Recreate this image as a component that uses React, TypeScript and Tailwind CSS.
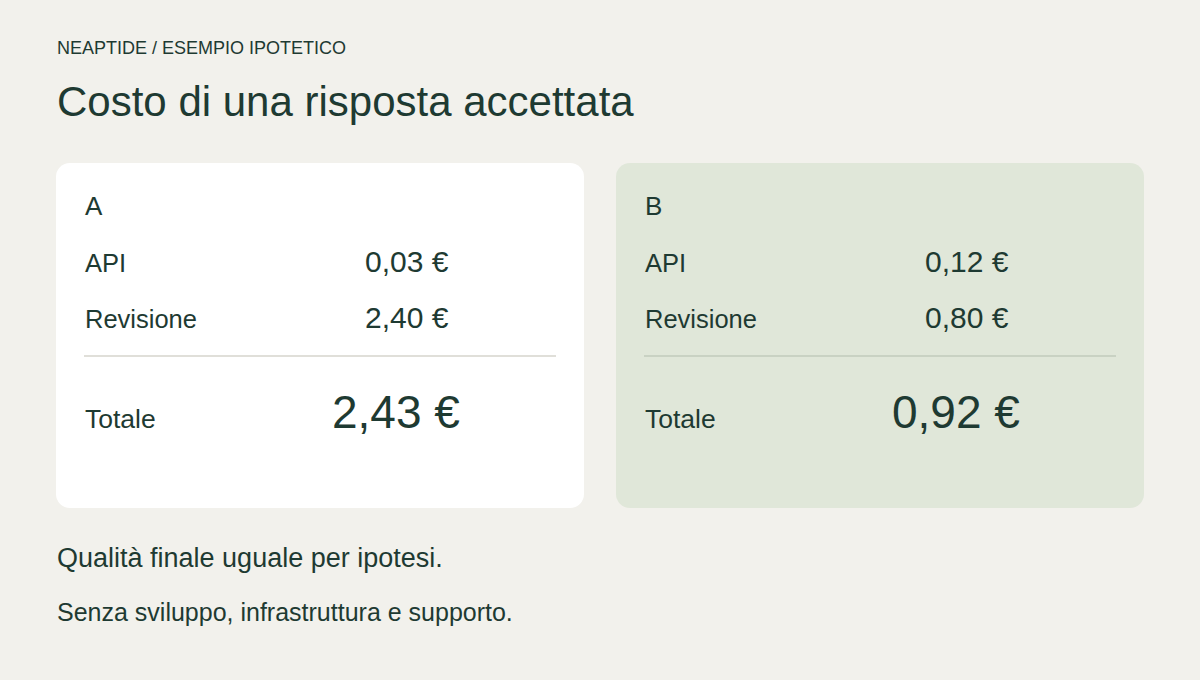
import React from "react";

const font = { fontFamily: '"Liberation Sans", Arial, sans-serif' };

type Card = { name: string; api: string; rev: string; total: string; tone: "white" | "green" };

const cards: Card[] = [
  { name: "A", api: "0,03 €", rev: "2,40 €", total: "2,43 €", tone: "white" },
  { name: "B", api: "0,12 €", rev: "0,80 €", total: "0,92 €", tone: "green" },
];

function CostCard({ c }: { c: Card }) {
  const green = c.tone === "green";
  return (
    <div
      className={
        green
          ? "w-[528px] rounded-[14px] bg-[#e0e7d9] px-7 pt-[30px] pb-[66px]"
          : "w-[528px] rounded-[14px] bg-white px-7 pt-[30px] pb-[66px]"
      }
    >
      <div className="text-[26px] leading-[26px] pl-[1px]">{c.name}</div>
      <div className="mt-[28px] flex items-baseline">
        <div className="w-[281px] text-[25.5px] leading-[30px] pl-[1px]">API</div>
        <div className="text-[30px] leading-[30px]">{c.api}</div>
      </div>
      <div className="mt-[25px] flex items-baseline">
        <div className="w-[281px] text-[25.5px] leading-[30px] pl-[1px]">Revisione</div>
        <div className="text-[30px] leading-[30px]">{c.rev}</div>
      </div>
      <div className={green ? "mt-[21px] h-[2px] bg-[#c9d2c3]" : "mt-[21px] h-[2px] bg-[#e0dfd9]"} />
      <div className="mt-[32px] flex items-baseline">
        <div className="w-[248px] text-[26.5px] leading-[46px] pl-[1px]">Totale</div>
        <div className="text-[46px] leading-[46px]">{c.total}</div>
      </div>
    </div>
  );
}

export default function App() {
  return (
    <div
      className="w-[1200px] h-[680px] bg-[#f2f1ec] px-14 pt-[39px] text-[#1e3a32] overflow-hidden"
      style={font}
    >
      <div className="text-[18px] leading-[18px] pl-[1px]">NEAPTIDE / ESEMPIO IPOTETICO</div>
      <h1 className="mt-6 text-[42px] leading-[42px] pl-[1px]">Costo di una risposta accettata</h1>
      <div className="mt-10 flex gap-8">
        {cards.map((c) => (
          <CostCard key={c.name} c={c} />
        ))}
      </div>
      <p className="mt-[37px] text-[27px] leading-[27px] pl-[1px]">Qualità finale uguale per ipotesi.</p>
      <p className="mt-7 text-[25px] leading-[25px] pl-[1px]">Senza sviluppo, infrastruttura e supporto.</p>
    </div>
  );
}
